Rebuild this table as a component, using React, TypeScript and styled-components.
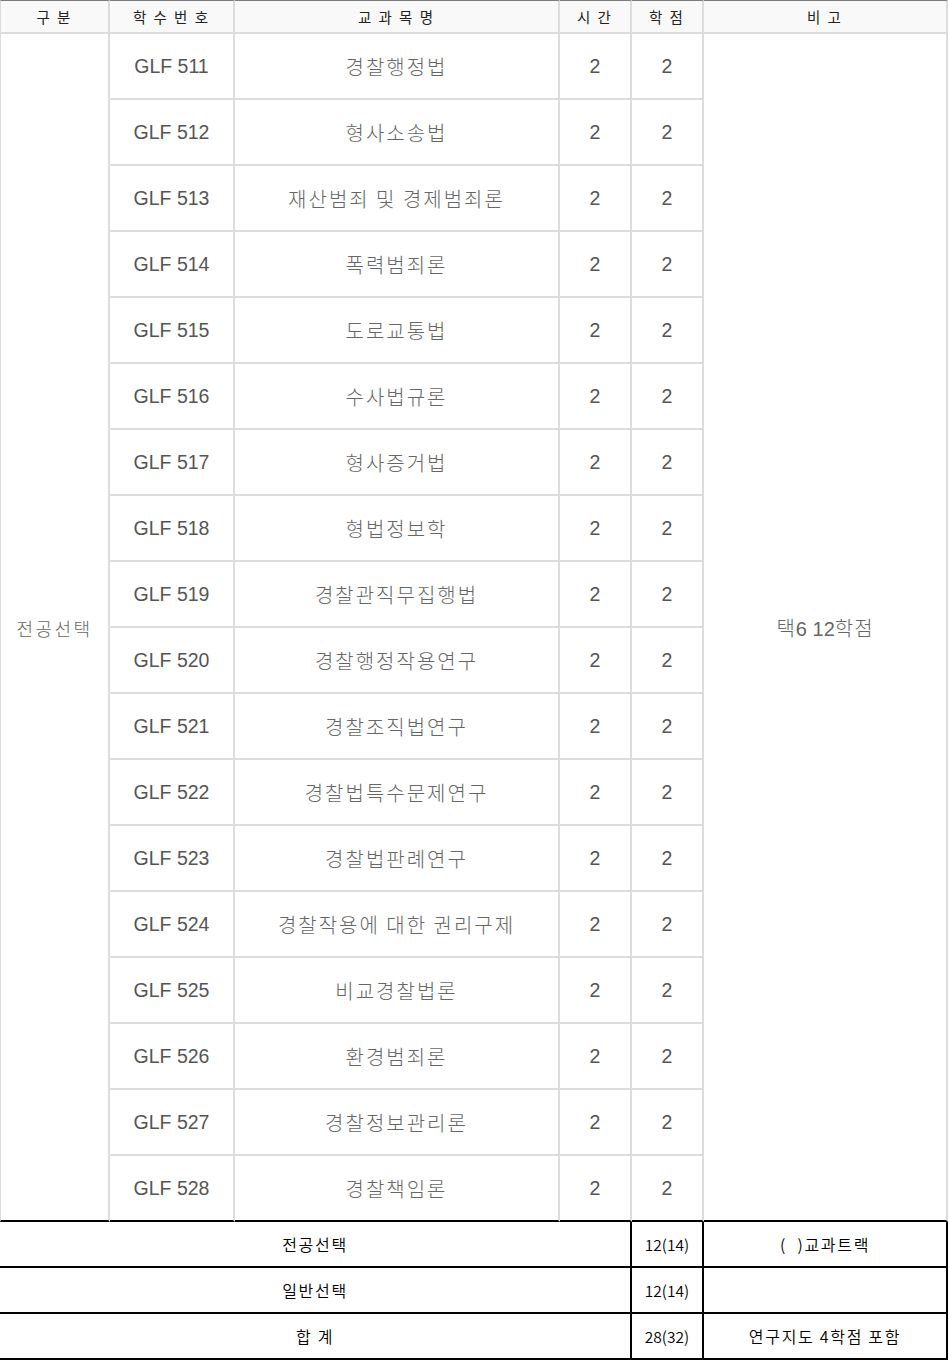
import styled, { createGlobalStyle } from 'styled-components';

const GlobalStyle = createGlobalStyle`
  * { box-sizing: border-box; }
  body {
    margin: 0;
    background: #ffffff;
    font-family: "Noto Sans CJK KR", "Noto Sans", sans-serif;
  }
`;

const courses: [string, string][] = [
  ['GLF 511', '경찰행정법'],
  ['GLF 512', '형사소송법'],
  ['GLF 513', '재산범죄 및 경제범죄론'],
  ['GLF 514', '폭력범죄론'],
  ['GLF 515', '도로교통법'],
  ['GLF 516', '수사법규론'],
  ['GLF 517', '형사증거법'],
  ['GLF 518', '형법정보학'],
  ['GLF 519', '경찰관직무집행법'],
  ['GLF 520', '경찰행정작용연구'],
  ['GLF 521', '경찰조직법연구'],
  ['GLF 522', '경찰법특수문제연구'],
  ['GLF 523', '경찰법판례연구'],
  ['GLF 524', '경찰작용에 대한 권리구제'],
  ['GLF 525', '비교경찰법론'],
  ['GLF 526', '환경범죄론'],
  ['GLF 527', '경찰정보관리론'],
  ['GLF 528', '경찰책임론'],
];

const summary = [
  { label: '전공선택', credits: '12(14)', note: '(\u00a0\u00a0)교과트랙' },
  { label: '일반선택', credits: '12(14)', note: '' },
  { label: '합 계', credits: '28(32)', note: '연구지도 4학점 포함' },
];

const Table = styled.table`
  width: 948px;
  table-layout: fixed;
  border-collapse: separate;
  border-spacing: 0;
`;

const Col = styled.col<{ $w: number }>`
  width: ${(p) => p.$w}px;
`;

const Th = styled.th<{ $first?: boolean }>`
  height: 34px;
  padding: 0;
  background-color: #f9f9f9;
  border-top: 1px solid #7a7a7a;
  border-right: 2px solid #dcdcdc;
  border-bottom: 2px solid #dcdcdc;
  border-left: ${(p) => (p.$first ? '1px solid #dcdcdc' : 'none')};
  color: #222;
  font-size: 14.5px;
  font-weight: normal;
  letter-spacing: 2px;
  text-align: center;
  vertical-align: middle;
`;

const Td = styled.td<{ $first?: boolean; $last?: boolean; $code?: boolean }>`
  height: 66px;
  padding: 0;
  border-right: 2px solid #dcdcdc;
  border-bottom: 2px solid ${(p) => (p.$last ? '#000' : '#dcdcdc')};
  border-left: ${(p) => (p.$first ? '1px solid #dcdcdc' : 'none')};
  color: ${(p) => (p.$code ? '#555' : '#666')};
  font-family: ${(p) =>
    p.$code
      ? '"Liberation Sans", Arial, sans-serif'
      : '"Noto Sans CJK KR", "Noto Sans", sans-serif'};
  font-size: ${(p) => (p.$code ? '19.5px' : '20px')};
  font-weight: ${(p) => (p.$code ? 'normal' : '300')};
  letter-spacing: ${(p) => (p.$code ? '0' : '2px')};
  text-align: center;
  vertical-align: middle;
`;

const SideLabel = styled.span`
  font-size: 18px;
  letter-spacing: 2.5px;
`;

const Note = styled.span`
  font-size: 20px;
  letter-spacing: 1px;
`;

const Num = styled.span`
  font-family: "Liberation Sans", Arial, sans-serif;
  letter-spacing: 0;
`;

const SumTd = styled.td<{ $digits?: boolean }>`
  height: 46px;
  padding: 0;
  border-right: 2px solid #000;
  border-bottom: 2px solid #000;
  color: #000;
  font-size: ${(p) => (p.$digits ? '15.5px' : '16px')};
  font-weight: 350;
  letter-spacing: ${(p) => (p.$digits ? '0' : '1.7px')};
  text-align: center;
  vertical-align: middle;
`;

export default function App() {
  return (
    <>
      <GlobalStyle />
      <Table>
        <colgroup>
          <Col $w={110} />
          <Col $w={125} />
          <Col $w={325} />
          <Col $w={72} />
          <Col $w={72} />
          <Col $w={244} />
        </colgroup>
        <thead>
          <tr>
            <Th $first>구 분</Th>
            <Th>학 수 번 호</Th>
            <Th>교 과 목 명</Th>
            <Th>시 간</Th>
            <Th>학 점</Th>
            <Th>비 고</Th>
          </tr>
        </thead>
        <tbody>
          {courses.map(([code, name], index) => {
            const last = index === courses.length - 1;
            return (
              <tr key={code}>
                {index === 0 && (
                  <Td $first $last rowSpan={courses.length}>
                    <SideLabel>전공선택</SideLabel>
                  </Td>
                )}
                <Td $code $last={last}>{code}</Td>
                <Td $last={last}>{name}</Td>
                <Td $code $last={last}>2</Td>
                <Td $code $last={last}>2</Td>
                {index === 0 && (
                  <Td $last rowSpan={courses.length}>
                    <Note>
                      택<Num>6 12</Num>학점
                    </Note>
                  </Td>
                )}
              </tr>
            );
          })}
        </tbody>
        <tfoot>
          {summary.map((row) => (
            <tr key={row.label}>
              <SumTd colSpan={4}>{row.label}</SumTd>
              <SumTd $digits>{row.credits}</SumTd>
              <SumTd>{row.note}</SumTd>
            </tr>
          ))}
        </tfoot>
      </Table>
    </>
  );
}
